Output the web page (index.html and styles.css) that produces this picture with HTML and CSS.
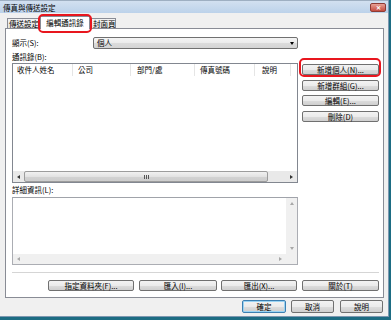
FILE: index.html
```html
<!DOCTYPE html>
<html>
<head>
<meta charset="utf-8">
<link rel="stylesheet" href="styles.css">
</head>
<body>
<div class="window">
  <div class="titlebar">
    <span class="title">傳真與傳送設定</span>
    <span class="close">✕</span>
  </div>
  <div class="tabs">
    <div class="tab t1">傳送設定</div>
    <div class="tab t2 active">編輯通訊錄</div>
    <div class="tab t3">封面頁</div>
  </div>
  <div class="panel">
    <div class="row-show">
      <span class="lbl-show">顯示(<u>S</u>):</span>
      <div class="select"><span>個人</span><span class="arrow"></span></div>
    </div>
    <div class="lbl lbl-book">通訊錄(<u>B</u>):</div>
    <div class="main">
      <div class="list">
        <div class="list-head">
          <div class="col c1">收件人姓名</div>
          <div class="col c2">公司</div>
          <div class="col c3">部門/處</div>
          <div class="col c4">傳真號碼</div>
          <div class="col c5">說明</div>
        </div>
        <div class="list-body"></div>
        <div class="hscroll">
          <div class="sarrow"><span class="tri tri-l"></span></div>
          <div class="thumb"><span class="grip"></span></div>
          <div class="track"></div>
          <div class="sarrow"><span class="tri tri-r"></span></div>
        </div>
      </div>
      <div class="side">
        <button class="btn b1">新增個人(<u>N</u>)...</button>
        <button class="btn b2">新增群組(<u>G</u>)...</button>
        <button class="btn b3">編輯(<u>E</u>)...</button>
        <button class="btn b4">刪除(<u>D</u>)</button>
      </div>
    </div>
    <div class="lbl lbl-detail">詳細資訊(<u>L</u>):</div>
    <div class="detail">
      <div class="detail-main">
        <div class="detail-text"></div>
        <div class="vscroll">
          <div class="varrow"><span class="tri tri-u dim"></span></div>
          <div class="vtrack"></div>
          <div class="varrow"><span class="tri tri-d dim"></span></div>
        </div>
      </div>
      <div class="hscroll2">
        <div class="sarrow"><span class="tri tri-l dim"></span></div>
        <div class="track"></div>
        <div class="sarrow"><span class="tri tri-r dim"></span></div>
        <div class="corner"></div>
      </div>
    </div>
    <div class="sep"></div>
    <div class="btn-row">
      <button class="btn w1">指定資料夾(<u>F</u>)...</button>
      <button class="btn w2">匯入(<u>I</u>)...</button>
      <button class="btn w3">匯出(<u>X</u>)...</button>
      <button class="btn w4">關於(<u>T</u>)</button>
    </div>
  </div>
  <div class="footer">
    <button class="btn fbtn ok">確定</button>
    <button class="btn fbtn cancel">取消</button>
    <button class="btn fbtn help">說明</button>
  </div>
  <div class="hl hl-tab"></div>
  <div class="hl hl-btn"></div>
</div>
</body>
</html>
```

FILE: styles.css
```css
* { box-sizing: border-box; margin: 0; padding: 0; }
body {
  margin: 0;
  width: 391px;
  height: 320px;
  overflow: hidden;
  background: #1d6c83;
  font-family: "Noto Sans CJK TC", "Liberation Sans", sans-serif;
  font-size: 7.5px;
  color: #000;
}
u { text-decoration: none; }
.window {
  position: relative;
  width: 389px;
  height: 317px;
  background: #f0f0f0;
  display: flex;
  flex-direction: column;
  border-right: 1px solid #7d97b0;
  border-bottom: 1px solid #7d97b0;
}
.titlebar {
  height: 13px;
  display: flex;
  align-items: center;
  padding-left: 3px;
  background: linear-gradient(#d2e0f0, #bcd2ea);
  border-top: 1px solid #9eafc2;
}
.title { line-height: 11px; }
.close {
  margin-left: auto;
  margin-right: 2px;
  width: 16px;
  height: 9px;
  border: 1px solid #8e3b34;
  border-radius: 2px;
  background: linear-gradient(#e8a196, #c54b3f);
  color: #fff;
  font-size: 6px;
  line-height: 7px;
  text-align: center;
  font-weight: bold;
}
.tabs {
  height: 15px;
  display: flex;
  align-items: flex-end;
  padding-left: 7px;
}
.tab {
  height: 10px;
  border: 1px solid #898c95;
  border-bottom: none;
  background: linear-gradient(#f3f3f3, #e3e3e3);
  line-height: 9px;
  text-align: center;
  white-space: nowrap;
}
.t1 { width: 33px; border-right: none; }
.t2 { width: 50px; }
.t3 { width: 26px; border-left: none; text-align: left; padding-left: 3px; }
.tab.active {
  height: 13px;
  margin-bottom: -1px;
  background: #fff;
  position: relative;
  z-index: 2;
  line-height: 11px;
}
.panel {
  margin-left: 5px;
  width: 379px;
  height: 270px;
  border: 1px solid #898c95;
  background: #fff;
  padding: 8px 4px 0 6px;
  display: flex;
  flex-direction: column;
}
.row-show {
  display: flex;
  align-items: center;
  height: 12px;
}
.lbl-show { width: 81px; line-height: 12px; }
.select {
  width: 205px;
  height: 12px;
  border: 1px solid #707070;
  border-radius: 2px;
  background: linear-gradient(#f4f4f4 0%, #ebebeb 50%, #dcdcdc 51%, #d4d4d4 100%);
  display: flex;
  align-items: center;
  padding-left: 3px;
  padding-right: 3px;
  line-height: 10px;
}
.arrow {
  margin-left: auto;
  width: 0;
  height: 0;
  border-left: 2.5px solid transparent;
  border-right: 2.5px solid transparent;
  border-top: 3px solid #000;
}
.lbl { height: 12px; line-height: 12px; }
.lbl-book { margin-top: 2px; }
.main {
  display: flex;
  gap: 4px;
  height: 120px;
}
.list {
  width: 286px;
  height: 120px;
  border: 1px solid #828790;
  background: #fff;
  display: flex;
  flex-direction: column;
}
.list-head {
  height: 12px;
  display: flex;
}
.col {
  border-right: 1px solid #e5e5e5;
  padding-left: 4px;
  line-height: 11px;
  white-space: nowrap;
  overflow: hidden;
}
.c1 { width: 60px; }
.c2 { width: 58px; padding-left: 5px; }
.c3 { width: 64px; padding-left: 6px; }
.c4 { width: 60px; padding-left: 5px; }
.c5 { width: 36px; padding-left: 7px; }
.list-body { flex: 1; }
.hscroll, .hscroll2 {
  height: 11px;
  display: flex;
  background: #e9e9e9;
}
.hscroll2 { height: 10px; background: #f0f0f0; }
.sarrow, .varrow {
  width: 11px;
  display: flex;
  align-items: center;
  justify-content: center;
}
.varrow { height: 11px; width: 11px; }
.thumb {
  width: 244px;
  border: 1px solid #9c9c9c;
  border-radius: 2px;
  background: linear-gradient(#f1f1f1 0%, #e3e3e3 50%, #d3d3d3 51%, #cdcdcd 100%);
  display: flex;
  align-items: center;
  justify-content: center;
}
.grip {
  width: 5px;
  height: 4px;
  background: repeating-linear-gradient(90deg, #555 0 1px, transparent 1px 2px);
}
.track { flex: 1; }
.tri { width: 0; height: 0; }
.tri-l { border-top: 2.5px solid transparent; border-bottom: 2.5px solid transparent; border-right: 3px solid #333; }
.tri-r { border-top: 2.5px solid transparent; border-bottom: 2.5px solid transparent; border-left: 3px solid #333; }
.tri-u { border-left: 2.5px solid transparent; border-right: 2.5px solid transparent; border-bottom: 3px solid #333; }
.tri-d { border-left: 2.5px solid transparent; border-right: 2.5px solid transparent; border-top: 3px solid #333; }
.tri-l.dim { border-right-color: #a8a8a8; }
.tri-r.dim { border-left-color: #a8a8a8; }
.tri-u.dim { border-bottom-color: #a8a8a8; }
.tri-d.dim { border-top-color: #a8a8a8; }
.side {
  width: 77px;
  display: flex;
  flex-direction: column;
}
.btn {
  font-family: inherit;
  font-size: 7.5px;
  color: #000;
  height: 11px;
  border: 1px solid #707070;
  border-radius: 2px;
  background: linear-gradient(#f3f3f3 0%, #ebebeb 50%, #dddddd 51%, #cfcfcf 100%);
  line-height: 9px;
  text-align: center;
  white-space: nowrap;
  padding: 0;
}
.b1 { margin-top: 1px; }
.b2 { margin-top: 5px; }
.b3 { margin-top: 4px; }
.b4 { margin-top: 5px; }
.lbl-detail { height: 14px; line-height: 14px; }
.detail {
  width: 286px;
  height: 68px;
  border: 1px solid #abadb3;
  border-top-color: #a0a3aa;
  background: #fff;
  display: flex;
  flex-direction: column;
}
.detail-main { flex: 1; display: flex; }
.detail-text { flex: 1; }
.vscroll {
  width: 11px;
  background: #f0f0f0;
  display: flex;
  flex-direction: column;
}
.vtrack { flex: 1; }
.corner { width: 11px; background: #f0f0f0; }
.sep {
  margin-top: 7px;
  height: 1px;
  width: 367px;
  background: #d5d5d5;
}
.btn-row {
  margin-top: 7px;
  display: flex;
  justify-content: flex-end;
  height: 11px;
}
.w1 { width: 86px; }
.w2 { width: 78px; margin-left: 5px; }
.w3 { width: 76px; margin-left: 4px; }
.w4 { width: 77px; margin-left: 5px; }
.footer {
  margin-top: 2px;
  display: flex;
  justify-content: flex-end;
  padding-right: 5px;
}
.fbtn { height: 13px; width: 43px; line-height: 11px; }
.ok {
  width: 44px;
  border-color: #3c7fb1;
  box-shadow: inset 0 0 0 1px #9ad3f3;
}
.cancel { margin-left: 5px; }
.help { margin-left: 6px; }
.hl {
  position: absolute;
  border: 2px solid #e8161e;
  border-radius: 5px;
  z-index: 5;
}
.hl-tab { left: 38px; top: 14px; width: 54px; height: 19px; }
.hl-btn { left: 299px; top: 58px; width: 82px; height: 19px; }
```
